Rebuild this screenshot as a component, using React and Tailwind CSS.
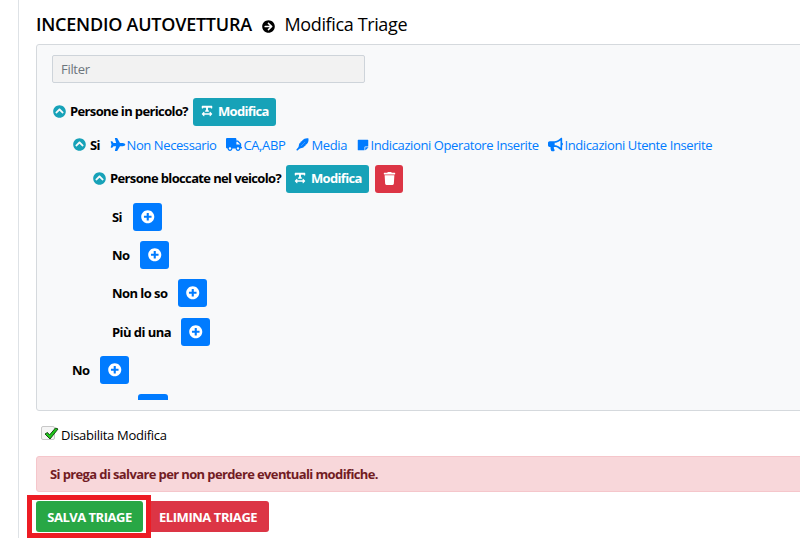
import {
  FaArrowCircleRight,
  FaBullhorn,
  FaChevronCircleUp,
  FaPlane,
  FaPlusCircle,
  FaStickyNote,
  FaTextWidth,
  FaTrash,
  FaTruck,
} from "react-icons/fa";

function Toggle() {
  return <FaChevronCircleUp className="mr-1 mb-px ml-px size-[13px] shrink-0 text-[#17a2b8]" />;
}

function Quill() {
  return (
    <svg viewBox="0 0 14 14" className="mr-[3px] mb-px -ml-px size-[13px] shrink-0" fill="currentColor">
      <path d="M13.3 0.4 C10.8 0 8.4 0.7 7 2.5 L6.2 3.4 L5.2 3.8 L4.5 5.3 L3.5 6 L2.7 9.7 L0.3 12.6 L1.2 13.6 L4.2 11.3 L8 10.3 L8.6 9.2 L10 8.6 L10.4 7.4 L11.5 6.7 C13.2 5.2 13.9 2.8 13.3 0.4 Z" />
      <path d="M5.4 8.7 L9.8 4.2" stroke="#8dc3ff" strokeWidth="0.5" />
    </svg>
  );
}

function EditButton() {
  return (
    <button className="ml-[5px] flex h-7 w-[83px] shrink-0 items-center rounded-[3px] bg-[#17a2b8] pb-0.5 pl-2 font-bold text-white">
      <FaTextWidth className="mr-[5px] size-3 shrink-0" />
      <span className="tracking-[-0.68px]">Modifica</span>
    </button>
  );
}

function AddButton() {
  return (
    <button className="flex h-7 w-[29px] shrink-0 items-center justify-center rounded-[3px] bg-[#007bff] pl-px text-white">
      <FaPlusCircle className="size-[13.5px]" />
    </button>
  );
}

function Answer({ label, width, className = "pl-[60px]" }) {
  return (
    <div className={`flex h-7 shrink-0 items-center ${className}`}>
      <span className={`shrink-0 font-bold tracking-[-0.55px] ${width}`}>{label}</span>
      <AddButton />
    </div>
  );
}

function Detail({ icon, label, width = "" }) {
  return (
    <span className={`flex shrink-0 items-center tracking-[-0.4px] text-[#007bff] ${width}`}>
      {icon}
      <span>{label}</span>
    </span>
  );
}

export default function App() {
  return (
    <div className="flex h-[538px] w-[800px] overflow-hidden bg-white pl-[18px] font-['Open_Sans','Noto_Sans',sans-serif] text-[13px] leading-5 whitespace-nowrap text-black">
      <main className="flex w-[782px] flex-col border-l border-[#dee2e6] pl-[17px]">
        <h1 className="flex h-11 shrink-0 items-center pt-1 text-[18px]">
          <span className="w-[226px] shrink-0 font-semibold tracking-[-0.24px]">INCENDIO AUTOVETTURA</span>
          <FaArrowCircleRight className="mt-1 mr-[9.5px] size-[13px] shrink-0" />
          <span className="tracking-[-0.37px]">Modifica Triage</span>
        </h1>

        <section className="h-[367px] w-[780px] shrink-0 rounded-[3px] border border-[#d5d9dd] bg-[#f8f9fa] pt-[10px] pl-[15px]">
          <input
            className="block h-7 w-[313px] rounded-[2px] border border-[#ced4da] bg-[#f2f2f2] px-2 tracking-[-0.3px] placeholder:text-[#6c757d]"
            placeholder="Filter"
          />
          <div className="mt-[15px] flex h-[302px] flex-col overflow-hidden">
            <div className="flex h-7 shrink-0 items-center">
              <Toggle />
              <span className="mb-0.5 w-[118px] shrink-0 font-bold tracking-[-0.63px]">Persone in pericolo?</span>
              <EditButton />
            </div>
            <div className="flex h-[39px] shrink-0 items-center pb-0.5 pl-5">
              <Toggle />
              <span className="w-[19.5px] shrink-0 font-bold tracking-[-0.6px]">Si</span>
              <Detail width="w-[116px]" icon={<FaPlane className="mr-px h-[13px] w-4" />} label="Non Necessario" />
              <Detail width="w-[71px]" icon={<FaTruck className="mr-0.5 h-[13px] w-4" />} label="CA,ABP" />
              <Detail width="w-[60px]" icon={<Quill />} label="Media" />
              <Detail width="w-[191px]" icon={<FaStickyNote className="mr-0.5 size-3" />} label="Indicazioni Operatore Inserite" />
              <Detail icon={<FaBullhorn className="mr-0.5 mb-px size-[15px]" />} label="Indicazioni Utente Inserite" />
            </div>
            <div className="flex h-7 shrink-0 items-center pl-10">
              <Toggle />
              <span className="mb-0.5 w-[171px] shrink-0 font-bold tracking-[-0.64px]">Persone bloccate nel veicolo?</span>
              <EditButton />
              <button className="ml-1.5 flex h-7 w-7 shrink-0 items-center justify-center rounded-[3px] bg-[#dc3545] pb-0.5 text-white">
                <FaTrash className="size-[13px]" />
              </button>
            </div>
            <div className="mt-[10px] flex shrink-0 flex-col gap-[10px]">
              <Answer label="Si" width="w-[21px]" />
              <Answer label="No" width="w-[28px]" />
              <Answer label="Non lo so" width="w-[66px]" />
              <Answer label="Più di una" width="w-[69px]" className="mt-px pl-[60px]" />
              <Answer label="No" width="w-[28px]" className="pl-5" />
              <div className="ml-[86px] h-7 w-[30px] rounded-[3px] bg-[#007bff]" />
            </div>
          </div>
        </section>

        <label className="mt-[14px] flex h-5 shrink-0 items-center pl-[5px]">
          <span className="relative mr-1.5 mb-1 size-[14px] shrink-0 rounded-[2px] border border-[#c8c8c8] bg-[#f5f5f5]">
            <svg viewBox="0 0 15 13" className="absolute top-0 left-[2px] h-[13px] w-[15px]">
              <path d="M1 7 L3.5 5.5 L5.5 8 L11.5 1 L14 2 L6 12 Z" fill="#20c81c" stroke="#174c14" />
            </svg>
          </span>
          <span className="tracking-[-0.28px]">Disabilita Modifica</span>
        </label>

        <div className="mt-[11px] flex h-9 w-[780px] shrink-0 items-center rounded-[3px] border border-[#f5c6cb] bg-[#f8d7da] pl-[13px] font-bold tracking-[-0.62px] text-[#721c24]">
          Si prega di salvare per non perdere eventuali modifiche.
        </div>

        <div className="-ml-[9px] mt-[3px] flex h-[43px] shrink-0 items-center font-bold text-white">
          <div className="z-10 flex h-[43px] w-[124px] shrink-0 items-center border-[5px] border-[#ed1c24] bg-white pl-1">
            <button className="h-[31px] w-[107px] rounded-[3px] bg-[#28a745] tracking-[-0.5px]">SALVA TRIAGE</button>
          </div>
          <button className="-ml-1 flex h-[31px] w-[122px] shrink-0 items-center rounded-[3px] bg-[#dc3545] pl-[12px] tracking-[-0.45px]">
            ELIMINA TRIAGE
          </button>
        </div>
      </main>
    </div>
  );
}
